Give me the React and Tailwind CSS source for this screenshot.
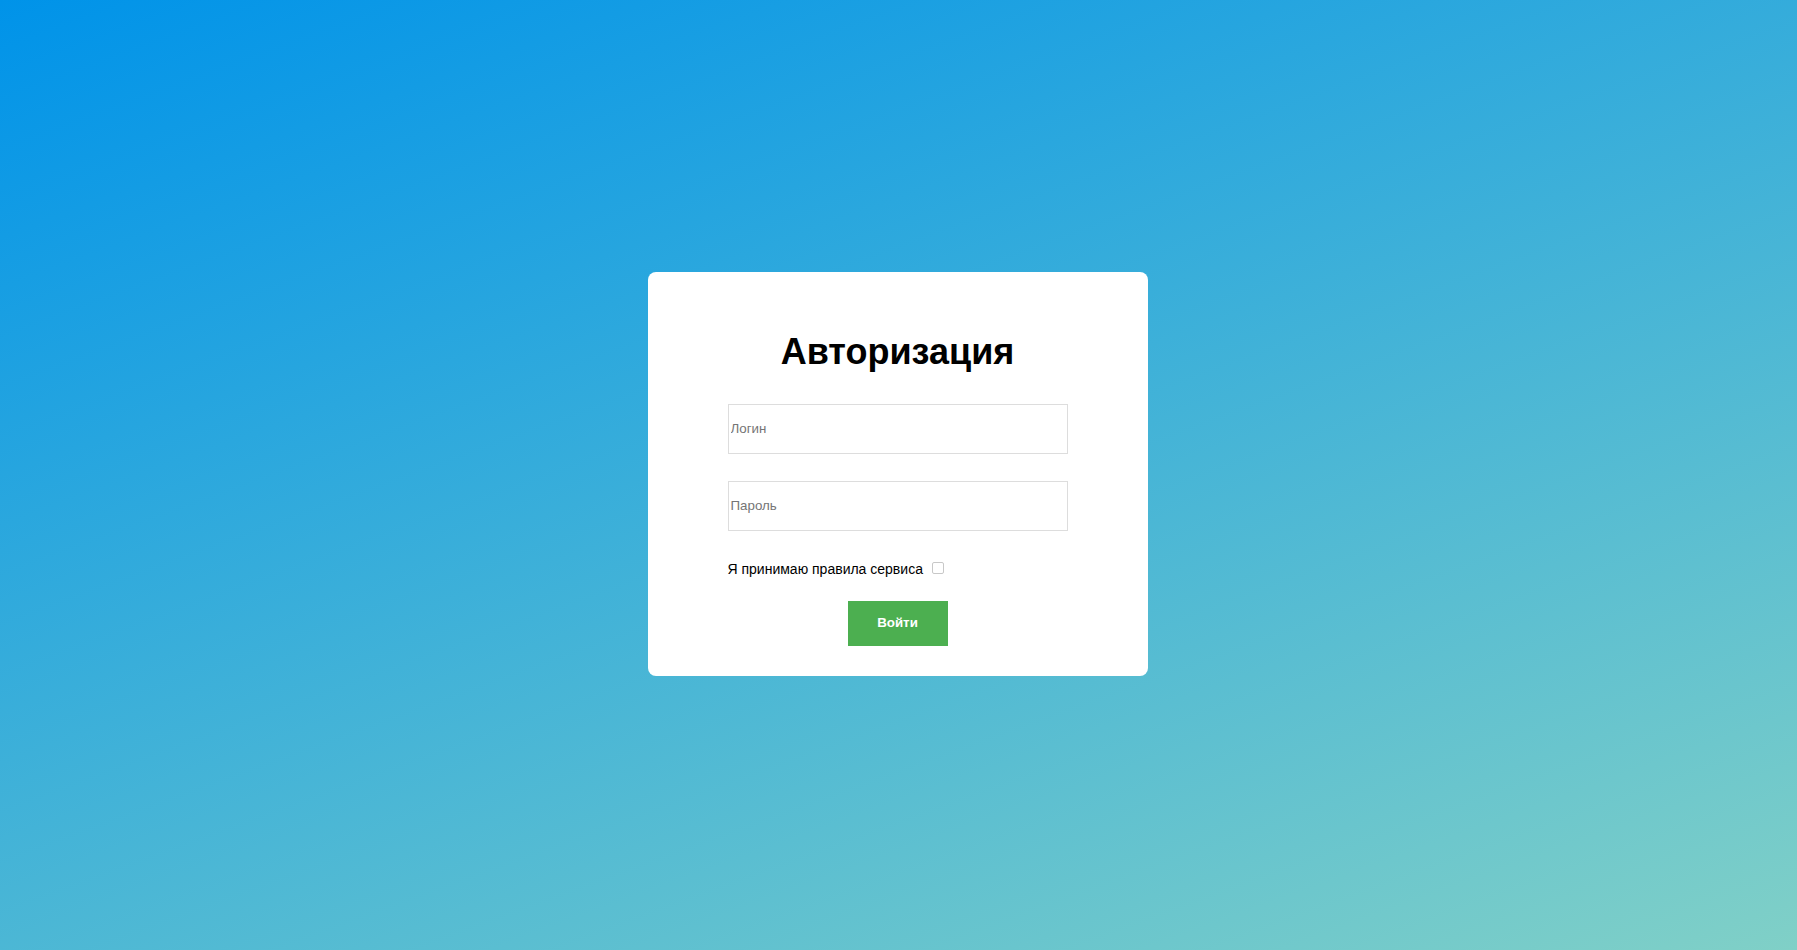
export default function App() {
  return (
    <div className="flex min-h-screen items-center justify-center bg-[linear-gradient(160deg,#0093E9_0%,#80D0C7_100%)] font-['Liberation_Sans',Arial,sans-serif]">
      <form className="-mt-[3px] -ml-[2px] w-[500px] rounded-lg bg-white px-20 pt-[59px] pb-[30px]">
        <h1 className="text-center text-[36px] leading-[41px] font-bold text-black">Авторизация</h1>
        <input
          type="text"
          placeholder="Логин"
          className="mt-[32px] block h-[50px] w-full border border-[#dddddd] px-[2px] text-[13.33px] text-black placeholder:text-[#757575] outline-none"
        />
        <input
          type="password"
          placeholder="Пароль"
          className="mt-[27px] block h-[50px] w-full border border-[#dddddd] px-[2px] text-[13.33px] text-black placeholder:text-[#757575] outline-none"
        />
        <label className="mt-[30px] flex items-center text-[14px] leading-[16px] text-black">
          Я принимаю правила сервиса
          <input
            type="checkbox"
            className="ml-[9px] h-3 w-3 -translate-y-px appearance-none rounded-[2px] border border-[#c8c8c8] bg-white"
          />
        </label>
        <div className="mt-[24px] flex justify-center">
          <button
            type="button"
            className="h-[45px] w-[100px] bg-[#4caf50] text-[13.33px] font-bold text-white"
          >
            Войти
          </button>
        </div>
      </form>
    </div>
  );
}
